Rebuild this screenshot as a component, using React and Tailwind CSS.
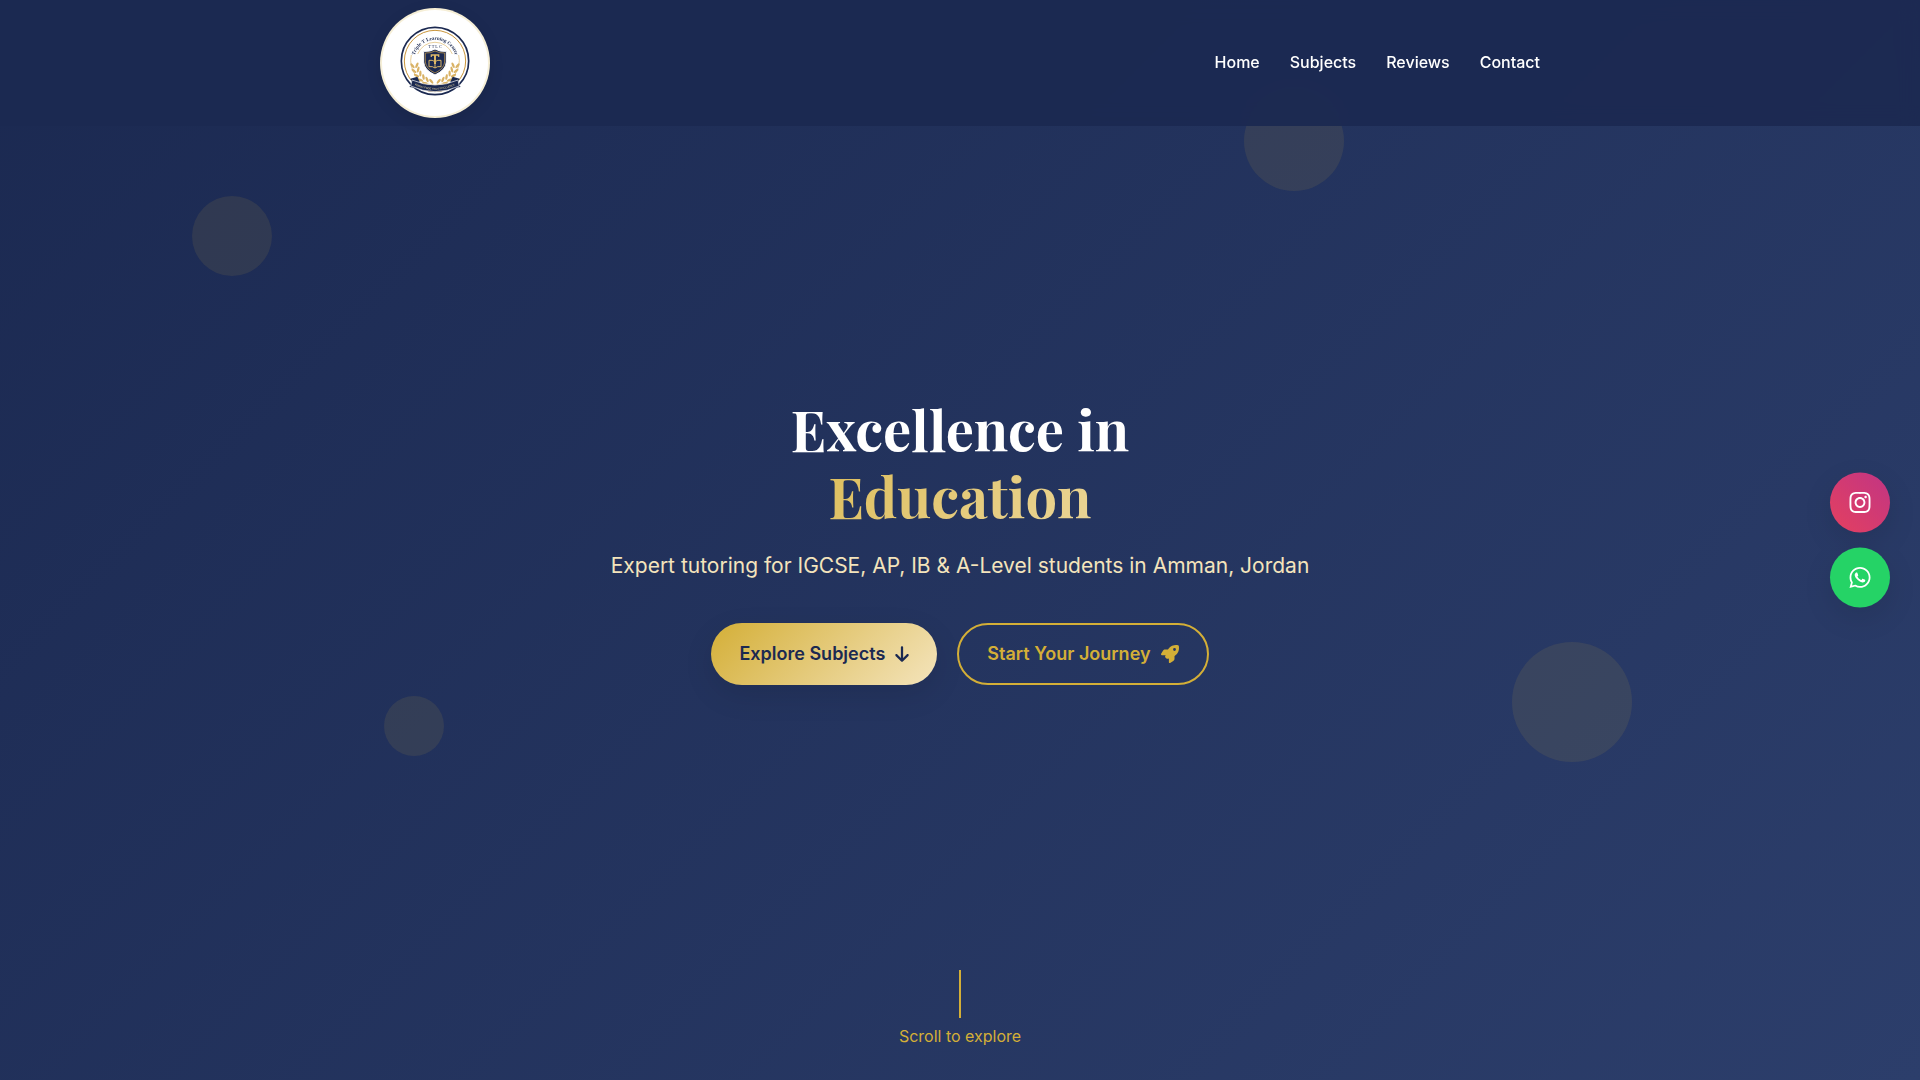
import { FaArrowDown, FaRocket, FaInstagram, FaWhatsapp } from "react-icons/fa6";

const navLinks = [
  { label: "Home", href: "#home" },
  { label: "Subjects", href: "#subjects" },
  { label: "Reviews", href: "#reviews" },
  { label: "Contact", href: "#contact" },
];

// One side of the laurel wreath: [x, y, rotation] for each leaf pair
const leaves = [
  [44, 118, -8],
  [48, 132, -18],
  [55, 145, -30],
  [65, 157, -42],
  [77, 166, -56],
  [91, 172, -70],
];

function Laurel() {
  return (
    <g fill="#d9b265">
      {leaves.map(([x, y, r]) => (
        <g key={y} transform={`translate(${x} ${y}) rotate(${r})`}>
          <ellipse cx="-6" cy="-3" rx="3.6" ry="9" transform="rotate(-32)" />
          <ellipse cx="6" cy="-3" rx="3.6" ry="9" transform="rotate(32)" />
        </g>
      ))}
    </g>
  );
}

function Emblem() {
  return (
    <svg viewBox="0 0 210 210" className="size-[70px]" role="img" aria-label="Triple T Learning Center">
      <defs>
        <path id="arc-top" d="M42.6 113A63 63 0 1 1 167.4 113" />
        <path id="arc-ribbon" d="M42 176Q105 206 168 176" />
      </defs>
      <circle cx="105" cy="105" r="101" fill="#fff" stroke="#1b2951" strokeWidth="5" />
      <circle cx="105" cy="105" r="92" fill="none" stroke="#c9953b" strokeWidth="3" />
      <path d="M34 87A73 73 0 1 0 176 87" fill="none" stroke="#dcb768" strokeWidth="2" />
      <path d="M53 84A56 56 0 0 1 157 84" fill="none" stroke="#dcb768" strokeWidth="2" />
      <text fill="#1b2951" className="font-['Liberation_Serif'] text-[15px] font-bold">
        <textPath href="#arc-top" startOffset="50%" textAnchor="middle">Triple T Learning Center</textPath>
      </text>
      <text x="105" y="66" textAnchor="middle" fill="#1b2951" className="font-['Liberation_Serif'] text-[13px]">
        T T L C
      </text>
      <Laurel />
      <g transform="matrix(-1 0 0 1 210 0)">
        <Laurel />
      </g>
      <path d="M105 69Q90 78 71 76V108Q72 132 105 147Q138 132 139 108V76Q120 78 105 69Z" fill="#1b2951" stroke="#fff" strokeWidth="3" />
      <path d="M105 75Q91 82 76 81V108Q78 128 105 141Q132 128 134 108V81Q119 82 105 75Z" fill="none" stroke="#d3a64c" strokeWidth="2" />
      <path d="M92 85H118V93H115L113 89H108V114H102V89H97L95 93H92Z" fill="#dcb768" />
      <path d="M105 107Q97 101 87 103V122Q98 120 105 126Q112 120 123 122V103Q113 101 105 107V126" fill="none" stroke="#dcb768" strokeWidth="3" />
      <path d="M31 158L52 152L60 170L50 186L28 183L37 172Z" fill="#1b2951" />
      <path d="M179 158L158 152L150 170L160 186L182 183L173 172Z" fill="#1b2951" />
      <path d="M36 162Q105 192 174 162L178 180Q105 214 32 180Z" fill="#1b2951" stroke="#fff" strokeWidth="2" />
      <text fill="#e8d59c" className="font-['Liberation_Sans'] text-[8px]">
        <textPath href="#arc-ribbon" startOffset="50%" textAnchor="middle">KNOWLEDGE AND EXCELLENCE</textPath>
      </text>
    </svg>
  );
}

function Header() {
  return (
    <header className="fixed inset-x-0 top-0 z-20 bg-[#1b2951]/95 backdrop-blur-[10px]">
      <div className="mx-auto flex max-w-[1200px] items-center justify-between px-5 py-2">
        <a
          href="#home"
          className="flex size-[110px] items-center justify-center rounded-full border-2 border-[#d4af37]/20 bg-white pb-1 shadow-[0_4px_15px_rgba(0,0,0,0.1)]"
        >
          <Emblem />
        </a>
        <nav aria-label="Main" className="pb-0.5">
          <ul className="flex gap-[30px]">
            {navLinks.map((link) => (
              <li key={link.label}>
                <a href={link.href} className="font-medium text-white">
                  {link.label}
                </a>
              </li>
            ))}
          </ul>
        </nav>
      </div>
    </header>
  );
}

function FloatingShapes() {
  return (
    <div aria-hidden="true" className="absolute inset-0">
      <span className="absolute left-[10%] top-[196px] size-20 rounded-full bg-[#d4af37]/10" />
      <span className="absolute right-[30%] top-[91px] size-[100px] rounded-full bg-[#d4af37]/10" />
      <span className="absolute right-[15%] top-[642px] size-[120px] rounded-full bg-[#d4af37]/10" />
      <span className="absolute left-[20%] top-[696px] size-[60px] rounded-full bg-[#d4af37]/10" />
    </div>
  );
}

function Hero() {
  return (
    <section
      id="home"
      className="relative flex min-h-screen items-center justify-center overflow-hidden bg-[linear-gradient(135deg,#1b2951_0%,#2c3e6b_100%)]"
    >
      <FloatingShapes />
      <div className="relative px-5 text-center">
        <h1 className="mb-5 font-['Playfair_Display','Liberation_Serif',serif] text-[56px] leading-[67px] font-bold text-white">
          <span className="block">Excellence in</span>
          <span className="block bg-[linear-gradient(135deg,#d4af37,#f4e4bc)] bg-clip-text text-transparent">
            Education
          </span>
        </h1>
        <p className="mb-[41px] text-[21px] leading-[33px] text-[#f4e4bc]">
          Expert tutoring for IGCSE, AP, IB &amp; A-Level students in Amman, Jordan
        </p>
        <div className="flex flex-wrap justify-center gap-5 text-[18px] leading-7 font-semibold">
          <a
            href="#subjects"
            className="inline-flex items-center gap-2.5 rounded-full bg-[linear-gradient(135deg,#d4af37,#f4e4bc)] px-7 py-[17px] text-[#1b2951] shadow-[0_10px_30px_rgba(0,0,0,0.1)]"
          >
            Explore Subjects
            <FaArrowDown className="w-3.5" />
          </a>
          <a
            href="#contact"
            className="inline-flex items-center gap-2.5 rounded-full border-2 border-[#d4af37] px-7 py-[15px] text-[#d4af37]"
          >
            Start Your Journey
            <FaRocket />
          </a>
        </div>
      </div>
      <div className="absolute inset-x-0 bottom-[30px] flex flex-col items-center gap-1 text-base text-[#d4af37]">
        <span className="h-12 w-0.5 bg-[#d4af37]" />
        <span className="leading-7">Scroll to explore</span>
      </div>
    </section>
  );
}

function SocialLinks() {
  return (
    <aside className="fixed top-1/2 right-[30px] z-10 flex -translate-y-1/2 flex-col gap-[15px] text-2xl text-white">
      <a
        href="#instagram"
        aria-label="Instagram"
        className="flex size-[60px] items-center justify-center rounded-full bg-[linear-gradient(45deg,#e4405f,#c13584)] shadow-[0_10px_30px_rgba(0,0,0,0.1)]"
      >
        <FaInstagram />
      </a>
      <a
        href="#whatsapp"
        aria-label="WhatsApp"
        className="flex size-[60px] items-center justify-center rounded-full bg-[#25d366] shadow-[0_10px_30px_rgba(0,0,0,0.1)]"
      >
        <FaWhatsapp />
      </a>
    </aside>
  );
}

export default function App() {
  return (
    <div className="font-[Inter,sans-serif]">
      <Header />
      <main>
        <Hero />
      </main>
      <SocialLinks />
    </div>
  );
}
